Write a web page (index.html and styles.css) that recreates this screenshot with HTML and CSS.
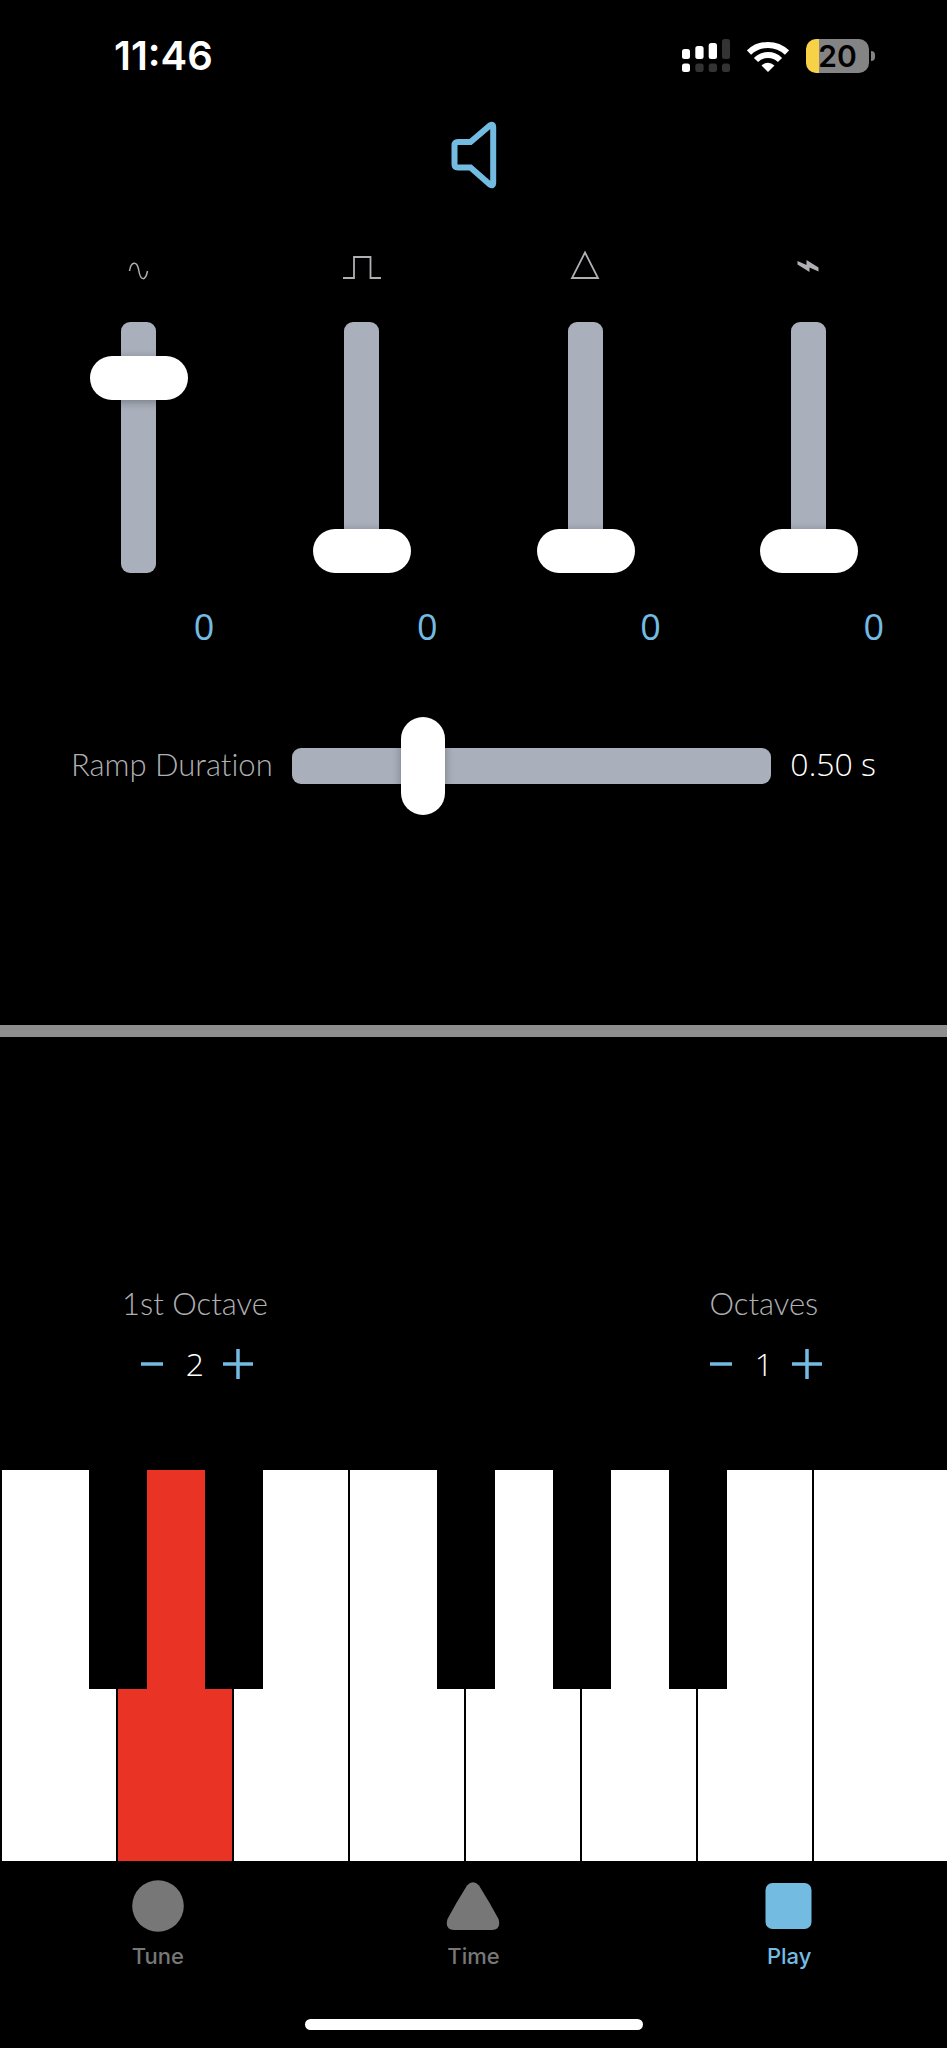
FILE: index.html
```html
<!DOCTYPE html>
<html lang="en">
<head>
<meta charset="utf-8">
<meta name="viewport" content="width=device-width, initial-scale=1">
<title>Play</title>
<link rel="stylesheet" href="styles.css">
</head>
<body>
<div class="app">
  <header class="status">
    <time class="clock">11:46</time>
    <div class="indicators">
      <svg class="signal" viewBox="0 0 48 34" width="48" height="34" aria-hidden="true">
        <g fill="#fff"><rect x="0" y="10" width="8" height="10" rx="2.5"/><rect x="13.300" y="7" width="8.300" height="13" rx="2.500"/><rect x="26.700" y="4" width="8.300" height="16" rx="2.500"/><rect x="0" y="24.500" width="8" height="8.500" rx="2.500"/></g>
        <g fill="#333"><rect x="40" y="0" width="8" height="20" rx="2.500"/><rect x="13.300" y="24.500" width="8.300" height="8.500" rx="2.500"/><rect x="26.700" y="24.500" width="8.300" height="8.500" rx="2.500"/><rect x="40" y="24.500" width="8" height="8.500" rx="2.500"/></g>
      </svg>
      <svg class="wifi" viewBox="0 0 42 31" width="42" height="31" aria-hidden="true">
        <g fill="none" stroke="#fff" stroke-width="6"><path d="M2 11.500A27.500 27.500 0 0 1 40 11.500"/><path d="M9 19A17 17 0 0 1 33 19"/></g>
        <path d="M21 31L14.500 24.500Q21 19 27.500 24.500Z" fill="#fff"/>
      </svg>
      <div class="battery"><span class="cell">20</span><span class="nub"></span></div>
    </div>
  </header>

  <main class="panel">
    <button class="speaker" type="button" aria-label="Sound">
      <svg viewBox="0 0 48 72" width="48" height="72" aria-hidden="true"><path d="M8 23H20.500L40.200 6.300Q43.200 4.500 43.200 8V64Q43.200 67.500 40.200 65.700L20.500 48.500H8Q4.500 48.500 4.500 45V26.500Q4.500 23 8 23Z" fill="none" stroke="currentColor" stroke-width="6"/></svg>
    </button>

    <section class="mixer">
      <div class="channel">
        <label class="wave" for="sine" aria-label="Sine"><svg viewBox="0 0 40 36" width="40" height="36"><path d="M10.500 24C12 14.500 17.500 13.500 19.500 22C21.500 35 26.500 34 28.500 24" fill="none" stroke="currentColor" stroke-width="1.500"/></svg></label>
        <input class="fader" id="sine" type="range" min="0" max="1000" value="836">
        <output class="level" for="sine">0</output>
      </div>
      <div class="channel">
        <label class="wave" for="square" aria-label="Square"><svg viewBox="0 0 40 36" width="40" height="36"><path d="M1 31H12V10H28.500V31H39" fill="none" stroke="currentColor" stroke-width="1.800"/></svg></label>
        <input class="fader" id="square" type="range" min="0" max="1000" value="0">
        <output class="level" for="square">0</output>
      </div>
      <div class="channel">
        <label class="wave" for="triangle" aria-label="Triangle"><svg viewBox="0 0 40 36" width="40" height="36"><path d="M20 5.500L33 31H7Z" fill="none" stroke="currentColor" stroke-width="1.800"/></svg></label>
        <input class="fader" id="triangle" type="range" min="0" max="1000" value="0">
        <output class="level" for="triangle">0</output>
      </div>
      <div class="channel">
        <label class="wave" for="saw" aria-label="Sawtooth"><svg viewBox="0 0 40 36" width="40" height="36"><path d="M9.500 14L18.500 18V13L30.500 20.500V24.500L21.500 20.500V25L9.500 17.500Z" fill="currentColor"/></svg></label>
        <input class="fader" id="saw" type="range" min="0" max="1000" value="0">
        <output class="level" for="saw">0</output>
      </div>
    </section>

    <section class="ramp">
      <label class="caption ramp-text" for="ramp">Ramp Duration</label>
      <input class="ramp-slider" id="ramp" type="range" min="0" max="2" step="0.01" value="0.5">
      <output class="ramp-text" for="ramp">0.50 s</output>
    </section>
  </main>

  <hr class="divider">

  <section class="octaves">
    <div class="octave" role="group" aria-labelledby="first-octave">
      <span class="caption" id="first-octave">1st Octave</span>
      <div class="stepper">
        <button type="button" aria-label="Decrease"><svg viewBox="0 0 32 32" width="32" height="32"><path d="M5 16H27" stroke="currentColor" stroke-width="3.500"/></svg></button>
        <output>2</output>
        <button type="button" aria-label="Increase"><svg viewBox="0 0 32 32" width="32" height="32"><path d="M1 16H31M16 1V31" stroke="currentColor" stroke-width="3.500"/></svg></button>
      </div>
    </div>
    <div class="octave" role="group" aria-labelledby="octave-count">
      <span class="caption" id="octave-count">Octaves</span>
      <div class="stepper">
        <button type="button" aria-label="Decrease"><svg viewBox="0 0 32 32" width="32" height="32"><path d="M5 16H27" stroke="currentColor" stroke-width="3.500"/></svg></button>
        <output>1</output>
        <button type="button" aria-label="Increase"><svg viewBox="0 0 32 32" width="32" height="32"><path d="M1 16H31M16 1V31" stroke="currentColor" stroke-width="3.500"/></svg></button>
      </div>
    </div>
  </section>

  <section class="piano" aria-label="Keyboard">
    <div class="slot"><button class="key" type="button" aria-label="C"></button><button class="sharp" type="button" aria-label="C sharp"></button></div>
    <div class="slot"><button class="key pressed" type="button" aria-label="D"></button><button class="sharp" type="button" aria-label="D sharp"></button></div>
    <div class="slot"><button class="key" type="button" aria-label="E"></button></div>
    <div class="slot"><button class="key" type="button" aria-label="F"></button><button class="sharp" type="button" aria-label="F sharp"></button></div>
    <div class="slot"><button class="key" type="button" aria-label="G"></button><button class="sharp" type="button" aria-label="G sharp"></button></div>
    <div class="slot"><button class="key" type="button" aria-label="A"></button><button class="sharp" type="button" aria-label="A sharp"></button></div>
    <div class="slot"><button class="key" type="button" aria-label="B"></button></div>
    <div class="slot"><button class="key" type="button" aria-label="High C"></button></div>
  </section>

  <nav class="tabs">
    <a class="tab" href="#tune"><svg viewBox="0 0 54 52" width="54" height="52" aria-hidden="true"><circle cx="27" cy="26" r="25.800" fill="currentColor"/></svg>Tune</a>
    <a class="tab" href="#time"><svg viewBox="0 0 54 52" width="54" height="52" aria-hidden="true"><path d="M21 5.500Q27 -1 33 5.500Q44 23 52.500 39Q55.500 49.500 46 50H8Q-1.500 49.500 1.500 39Q10 23 21 5.500Z" fill="currentColor"/></svg>Time</a>
    <a class="tab active" href="#play" aria-current="page"><svg viewBox="0 0 54 52" width="54" height="52" aria-hidden="true"><rect x="3.500" y="3" width="46" height="46" rx="7" fill="currentColor"/></svg>Play</a>
  </nav>
  <div class="home-bar"></div>
</div>
</body>
</html>
```
FILE: styles.css
```css
:root {
  --blue: #74bbe2;
  --track: #a9afbb;
  --label: #b0b0b4;
}

* {
  box-sizing: border-box;
}

body {
  margin: 0;
  background: #000;
  color: #fff;
  font-family: "Open Sans", "Noto Sans", sans-serif;
  font-size: 32px;
  font-weight: 300;
  line-height: 40px;
}

button {
  padding: 0;
  border: 0;
  background: none;
  color: var(--blue);
  cursor: pointer;
}

svg {
  display: block;
}

.app {
  display: flex;
  flex-direction: column;
  min-height: 100vh;
}

.caption {
  color: var(--label);
  font-family: Lato, "Open Sans", sans-serif;
  font-size: 31px;
  font-variant-ligatures: none;
}

/* Status bar */
.status {
  display: flex;
  align-items: center;
  justify-content: space-between;
  height: 112px;
  padding: 0 72px 0 114px;
  font-family: Inter, sans-serif;
  font-weight: 600;
}

.clock {
  font-size: 40px;
}

.indicators {
  display: flex;
  align-items: center;
  gap: 17px;
}

.battery {
  display: flex;
  align-items: center;
  gap: 2px;
}

.cell {
  width: 63px;
  height: 34px;
  border-radius: 10px;
  background: linear-gradient(to right, #f7d247 13px, #848484 13px);
  color: #000;
  font-size: 30px;
  line-height: 34px;
  text-align: center;
}

.nub {
  width: 4px;
  height: 10px;
  border-radius: 0 5px 5px 0;
  background: #848484;
}

/* Oscillator panel */
.panel {
  padding: 7px 0 210px;
}

.speaker {
  display: block;
  margin: 0 auto 56px;
}

.mixer {
  display: grid;
  grid-template-columns: repeat(4, 1fr);
  padding: 0 27px;
}

.channel {
  display: flex;
  flex-direction: column;
  align-items: center;
}

.wave {
  color: var(--label);
}

.level {
  align-self: flex-end;
  margin: 30px 36px 0 0;
  color: var(--blue);
  font-size: 36px;
  font-weight: 400;
  line-height: 48px;
}

.fader,
.ramp-slider {
  appearance: none;
  margin: 0;
  background: none;
}

.fader {
  width: 98px;
  height: 251px;
  margin-top: 39px;
  writing-mode: vertical-lr;
  direction: rtl;
}

.fader::-webkit-slider-runnable-track {
  width: 35px;
  height: 100%;
  border-radius: 9px;
  background: var(--track);
}

.fader::-webkit-slider-thumb {
  appearance: none;
  width: 98px;
  height: 44px;
  margin-left: -31px;
  border-radius: 22px;
  background: #fff;
  box-shadow: 0 2px 8px rgba(0, 0, 0, 0.3);
}

.ramp {
  display: flex;
  align-items: center;
  gap: 19px;
  margin-top: 66px;
  padding: 0 71px;
}

.ramp-text {
  padding-bottom: 4px;
}

.ramp-slider {
  flex: 1;
  min-width: 0;
  height: 98px;
}

.ramp-slider::-webkit-slider-runnable-track {
  height: 36px;
  border-radius: 9px;
  background: var(--track);
}

.ramp-slider::-webkit-slider-thumb {
  appearance: none;
  width: 44px;
  height: 98px;
  margin-top: -31px;
  border-radius: 22px;
  background: #fff;
  box-shadow: 0 2px 8px rgba(0, 0, 0, 0.3);
}

.divider {
  width: 100%;
  height: 12px;
  margin: 0;
  border: 0;
  background: #8e8e8e;
}

/* Octave steppers */
.octaves {
  display: flex;
  justify-content: space-between;
  padding: 246px 124px 86px 122px;
}

.octave {
  display: flex;
  flex-direction: column;
  align-items: center;
  gap: 21px;
}

.stepper {
  display: flex;
  align-items: center;
  gap: 18px;
}

/* Keyboard */
.piano {
  display: grid;
  flex: 1;
  grid-template-columns: repeat(7, 114fr) 133fr;
  gap: 2px;
  min-height: 391px;
  padding-left: 2px;
}

.slot {
  display: grid;
  position: relative;
}

.key {
  background: #fff;
}

.key.pressed {
  background: #e93425;
}

.sharp {
  position: absolute;
  z-index: 1;
  top: 0;
  right: -27%;
  width: 51%;
  height: 56%;
  background: #000;
}

/* Tab bar */
.tabs {
  display: grid;
  grid-template-columns: repeat(3, 1fr);
  padding: 19px 0 49px;
}

.tab {
  display: flex;
  flex-direction: column;
  align-items: center;
  gap: 10px;
  color: #777;
  font-family: Inter, sans-serif;
  font-size: 22px;
  font-weight: 500;
  line-height: 28px;
  text-decoration: none;
}

.tab.active {
  color: var(--blue);
}

.home-bar {
  width: 338px;
  height: 11px;
  margin: 0 auto 18px;
  border-radius: 6px;
  background: #fff;
}
```
